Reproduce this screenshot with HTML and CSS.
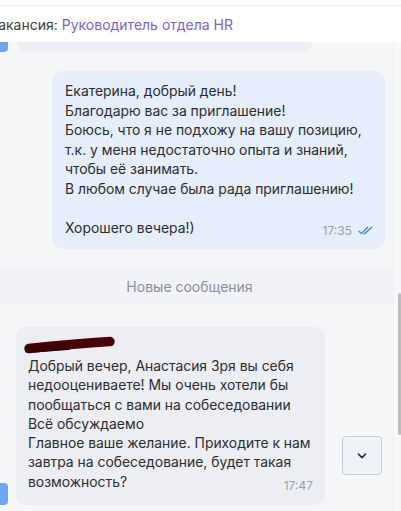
FILE: index.html
```html
<!DOCTYPE html>
<html lang="ru">
<head>
<meta charset="utf-8">
<link rel="stylesheet" href="styles.css">
</head>
<body>
<div class="page">
  <div class="top-strip"></div>
  <div class="header">
    <span class="label">Вакансия: </span><span class="link">Руководитель отдела HR</span>
  </div>
  <div class="chat">
    <div class="row prev-row">
      <div class="tab tab-short"></div>
      <div class="prev-bubble"></div>
    </div>

    <div class="bubble out">
      <div class="text">Екатерина, добрый день!<br>Благодарю вас за приглашение!<br>Боюсь, что я не подхожу на вашу позицию,<br>т.к. у меня недостаточно опыта и знаний,<br>чтобы её занимать.<br>В любом случае была рада приглашению!<br><br>Хорошего вечера!)</div>
      <div class="meta">
        <span class="time">17:35</span>
        <svg class="checks" width="15" height="9" viewBox="0 0 15 9"><path d="M1 5.2 L3.4 7.6 L9.6 1.2 M6.2 7.4 L6.6 7.8 L13.6 1.2" fill="none" stroke="#3d7fd9" stroke-width="1.3" stroke-linecap="round" stroke-linejoin="round"/></svg>
      </div>
    </div>

    <div class="divider">Новые сообщения</div>

    <div class="row in-row">
      <div class="tab tab-bottom"></div>
      <div class="bubble in">
        <svg class="redact" width="96" height="18" viewBox="0 0 96 18"><path d="M7 12.5 C 25 10.5, 50 8, 88 5.5" fill="none" stroke="#470305" stroke-width="9.5" stroke-linecap="round"/><path d="M6 14 C 20 13, 34 12, 46 11" fill="none" stroke="#3b0204" stroke-width="6" stroke-linecap="round"/></svg>
        <div class="text">Добрый вечер, Анастасия Зря вы себя<br>недооцениваете! Мы очень хотели бы<br>пообщаться с вами на собеседовании<br>Всё обсуждаемо<br>Главное ваше желание. Приходите к нам<br>завтра на собеседование, будет такая<br>возможность?</div>
        <div class="meta"><span class="time">17:47</span></div>
      </div>
    </div>

    <button class="scroll-down" type="button" aria-label="Вниз">
      <svg width="12" height="8" viewBox="0 0 12 8"><path d="M2.5 2.2 L6 5.6 L9.5 2.2" fill="none" stroke="#2f3440" stroke-width="1.7" stroke-linecap="round" stroke-linejoin="round"/></svg>
    </button>
    <div class="scrollbar"><div class="thumb"></div></div>
  </div>
</div>
</body>
</html>
```

FILE: styles.css
```css
* { box-sizing: border-box; }
html, body { margin: 0; padding: 0; }
body {
  width: 401px;
  height: 511px;
  overflow: hidden;
  background: #f6f7f9;
  font-family: Inter, "Noto Sans", sans-serif;
  color: #2c2d30;
}
.page { width: 401px; height: 511px; display: flex; flex-direction: column; }
.top-strip {
  height: 6px;
  background: #fff;
  border-bottom: 1px solid #e9eaee;
}
.header {
  height: 36px;
  background: #fff;
  font-size: 14px;
  line-height: 34px;
  padding-top: 2px;
  white-space: nowrap;
  text-indent: -11px;
  overflow: hidden;
}
.header .label { color: #3a3b40; }
.header .link { color: #8060c8; }

.chat {
  position: relative;
  flex: 1;
  background: #f6f7f9;
  display: flex;
  flex-direction: column;
}
.row { display: flex; }
.prev-row { height: 10px; }
.tab { width: 8px; background: #6fa6f3; border-radius: 0 0 4px 0; }
.tab-short { height: 10px; }
.prev-bubble {
  margin-left: 9px;
  width: 295px;
  height: 10px;
  background: #eef0f5;
  border-radius: 0 0 10px 10px;
}

.bubble {
  position: relative;
  border-radius: 10px;
  font-size: 13.9px;
  line-height: 19.5px;
  color: #2c2d30;
}
.bubble.out {
  margin: 19px 0 0 52px;
  width: 333px;
  height: 178px;
  padding: 11px 12px 11px 13px;
  background: #e5eefa;
}
.meta {
  position: absolute;
  right: 12px;
  bottom: 9px;
  display: flex;
  align-items: center;
  gap: 6px;
}
.time { font-size: 12px; color: #9aa0ab; }
.checks { display: block; }

.divider {
  margin-top: 21px;
  height: 34px;
  line-height: 34px;
  text-align: center;
  font-size: 14px;
  color: #8a909a;
  background: #f1f3f8;
  padding-right: 22px;
}

.in-row { margin-top: 23px; align-items: flex-end; }
.tab-bottom { height: 22px; border-radius: 0 4px 4px 0; }
.bubble.in {
  margin-left: 8px;
  width: 309px;
  height: 178px;
  padding: 9px 12px 13px 12px;
  background: #eceef4;
}
.bubble.in .meta { right: 12px; bottom: 10px; }
.redact { display: block; margin-left: -6px; }
.bubble.in .text { margin-top: 3px; line-height: 19.3px; }

.scroll-down {
  position: absolute;
  left: 342px;
  top: 394px;
  width: 40px;
  height: 39px;
  padding: 0;
  border: 1px solid #c7cbd5;
  border-radius: 4px;
  background: #f0f2f9;
  display: flex;
  align-items: center;
  justify-content: center;
}
.scroll-down svg { display: block; }
.scrollbar {
  position: absolute;
  right: 0;
  top: 0;
  bottom: 0;
  width: 8px;
  background: #f8f8f9;
  border-left: 1px solid #eeeff2;
}
.thumb {
  position: absolute;
  right: 0;
  top: 251px;
  width: 3px;
  height: 142px;
  background: #bdbdbd;
  border-radius: 2px;
}
```
